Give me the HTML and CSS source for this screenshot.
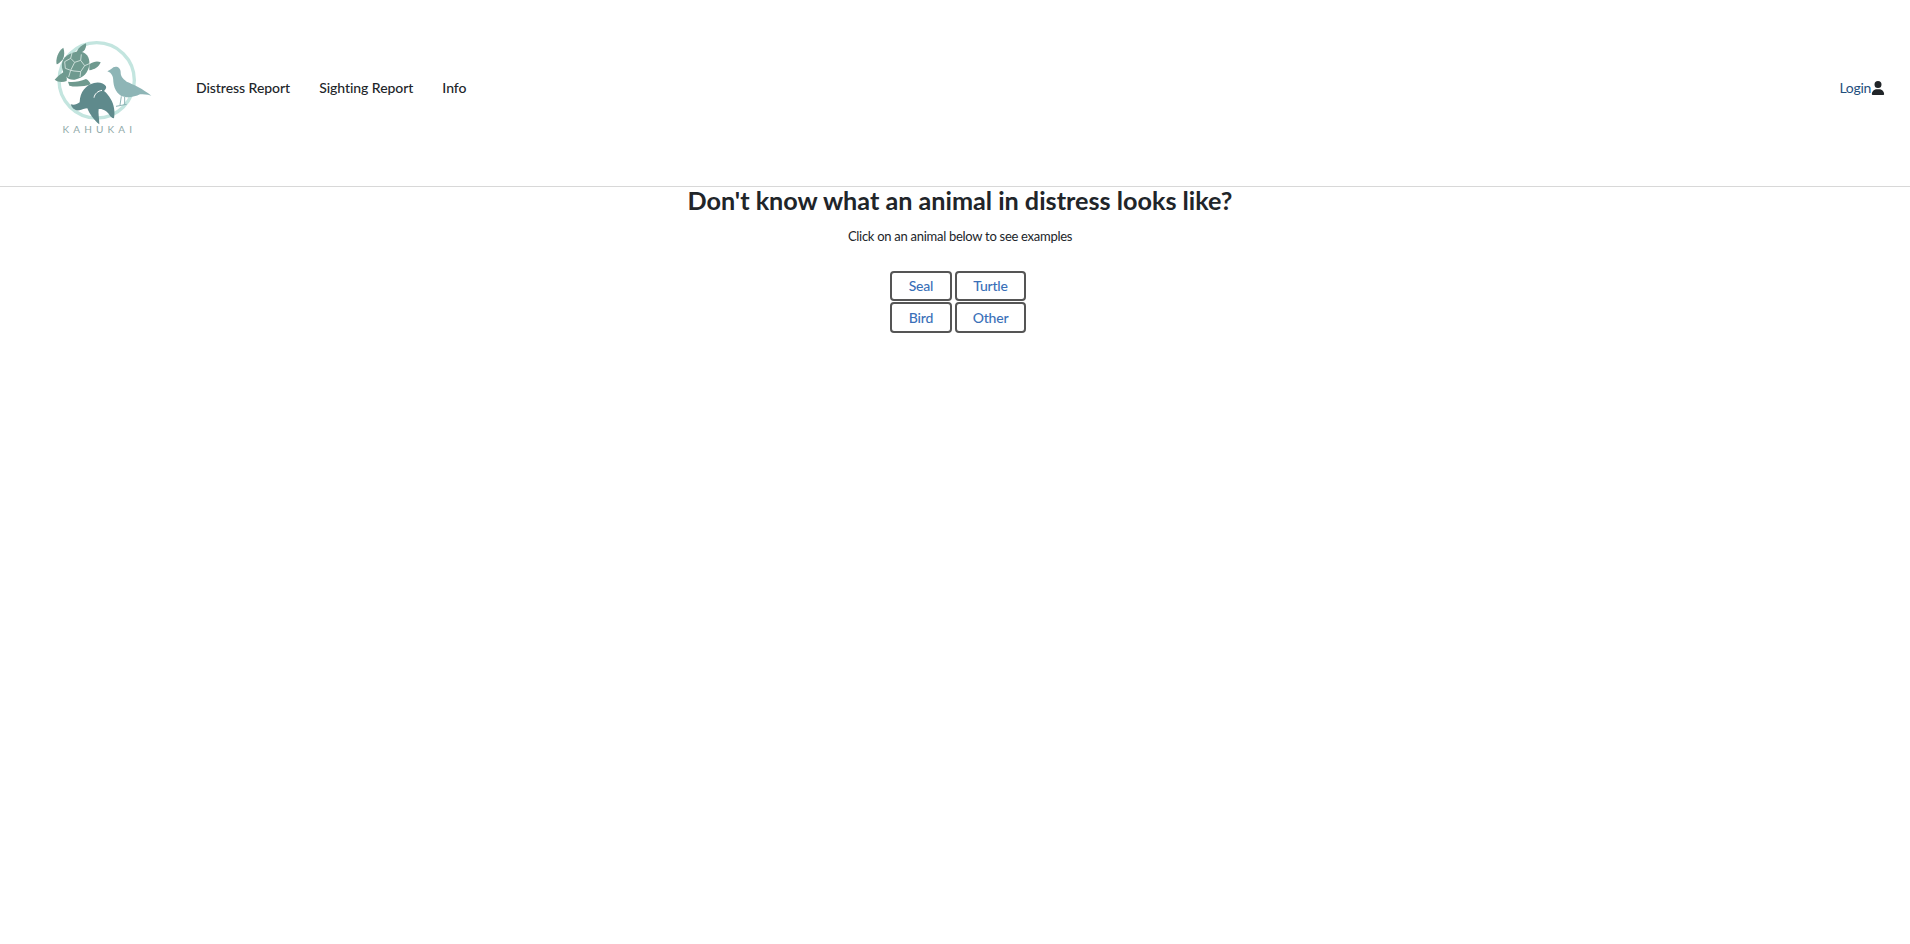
FILE: index.html
```html
<!DOCTYPE html>
<html lang="en">
<head>
    <meta charset="UTF-8">
    <title>Kahukai</title>
    <link rel="stylesheet" href="styles.css">
</head>
<body>
<header class="header">
    <a class="logo" href="#">
        <svg width="140" height="120" viewBox="0 0 420 360">
            <!-- ring -->
            <circle cx="200" cy="166" r="113" fill="none" stroke="#c3e5df" stroke-width="10"/>
            <!-- turtle -->
            <g fill="#6f9a8f">
                <path d="M100 68 C104 80 104 92 98 104 C90 112 84 118 80 118 C76 104 84 78 100 68Z"/>
                <path d="M168 55 C170 68 164 80 150 84 L140 80 C146 68 156 60 168 55Z"/>
                <path d="M178 118 C192 108 204 108 212 112 C206 126 194 134 178 136Z"/>
                <path d="M102 140 C92 146 82 154 74 164 C84 172 98 172 110 168 C112 158 108 148 102 140Z"/>
                <path d="M114 170 C130 172 150 170 168 162 C176 166 180 172 182 178 C164 186 130 186 118 182Z"/>
                <path d="M96 128 C92 102 110 86 138 80 C166 76 180 94 178 118 C176 142 160 160 134 164 C112 166 100 150 96 128Z"/>
            </g>
            <g fill="none" stroke="#dcebe6" stroke-width="2.5">
                <path d="M126 84 L122 100 L134 112 L152 106 L154 88"/>
                <path d="M122 100 L104 110 L106 130 L122 136 L134 112"/>
                <path d="M152 106 L164 122 L152 140 L132 138 L122 136"/>
                <path d="M164 122 L178 116"/>
                <path d="M152 140 L150 156"/>
                <path d="M122 136 L116 156"/>
            </g>
            <!-- seal -->
            <path fill="#5f8a8c" d="M228 184 C222 174 206 170 192 174 C168 180 150 200 149 232 C140 240 130 240 122 238 C126 250 136 258 148 256 C156 254 164 250 172 250 C178 266 192 286 208 298 C208 280 204 264 206 252 C218 250 230 258 236 266 C240 274 246 280 252 280 C256 260 252 238 242 222 C236 212 230 204 222 198 C226 194 230 190 228 184Z"/>
            <path fill="none" stroke="#fff" stroke-width="3" d="M216 196 C204 198 194 206 192 218"/>
            <!-- bird -->
            <path fill="#8eb5b6" d="M232 139 C240 136 246 130 250 127 C260 122 272 128 272 142 C272 152 276 160 290 170 C310 178 340 192 364 212 C350 208 340 208 330 208 C318 214 300 218 286 216 C268 214 252 196 250 170 C250 155 246 144 232 139Z"/>
            <path fill="none" stroke="#8eb5b6" stroke-width="3" d="M274 214 L270 240 M284 216 L284 240 M258 244 L290 238"/>
            <text class="logo-name" x="208" y="325" text-anchor="middle">KAHUKAI</text>
        </svg>
    </a>
    <nav class="nav">
        <a href="#">Distress Report</a>
        <a href="#">Sighting Report</a>
        <a href="#">Info</a>
    </nav>
    <a class="login" href="#">Login<svg width="14" height="14" viewBox="0 0 448 512"><path fill="#212529" d="M224 256a128 128 0 1 0 0-256 128 128 0 1 0 0 256zm-45.700 48C79.800 304 0 383.800 0 482.300 0 498.700 13.300 512 29.700 512h388.600c16.400 0 29.700-13.300 29.700-29.700C448 383.800 368.200 304 269.700 304h-91.400z"/></svg></a>
</header>
<main class="main">
    <h1>Don't know what an animal in distress looks like?</h1>
    <p>Click on an animal below to see examples</p>
    <div class="animals">
        <button class="seal">Seal</button>
        <button class="turtle">Turtle</button>
        <button class="bird">Bird</button>
        <button class="other">Other</button>
    </div>
</main>
</body>
</html>
```

FILE: styles.css
```css
*{
    padding: 0;
    margin: 0;
    box-sizing: border-box;
}
body{
    font-family: Lato, "Liberation Sans", sans-serif;
    font-size: 14px;
    color: #212529;
    background: #fff;
}
a{
    text-decoration: none;
}
.header{
    height: 187px;
    border-bottom: 1px solid #d8d8d8;
    display: flex;
    align-items: flex-start;
    padding: 25px 25px 0 30px;
}
.logo{
    display: block;
    width: 140px;
    height: 120px;
}
.logo-name{
    font-family: Lato, sans-serif;
    font-size: 30px;
    letter-spacing: 12.5px;
    fill: #8fa9a9;
}
.nav{
    display: flex;
    gap: 29px;
    margin-left: 26px;
    margin-top: 54px;
    line-height: 18px;
}
.nav a{
    color: #212529;
    font-weight: 500;
    letter-spacing: -0.05px;
}
.login{
    margin-left: auto;
    margin-top: 54px;
    line-height: 18px;
    color: #1f4f7d;
    letter-spacing: -0.3px;
    display: flex;
    align-items: center;
}
.main{
    text-align: center;
    padding-left: 10px;
}
h1{
    font-size: 25.2px;
    line-height: 30px;
    font-weight: 700;
    margin-top: -2px;
}
.main p{
    margin-top: 12px;
    font-size: 13px;
    line-height: 18px;
    letter-spacing: -0.28px;
}
.animals{
    display: grid;
    grid-template-columns: 62px 71px;
    column-gap: 3px;
    row-gap: 1px;
    justify-content: center;
    margin-top: 26px;
    margin-left: -4px;
}
.animals button{
    height: 30px;
    padding-bottom: 1px;
    background: #fff;
    border: 2px solid #555;
    border-radius: 4px;
    font-family: inherit;
    font-size: 14px;
    letter-spacing: -0.2px;
    color: #3a70b8;
    font-weight: 500;
    cursor: pointer;
}
.animals .bird,.animals .other{
    height: 31px;
}
```
